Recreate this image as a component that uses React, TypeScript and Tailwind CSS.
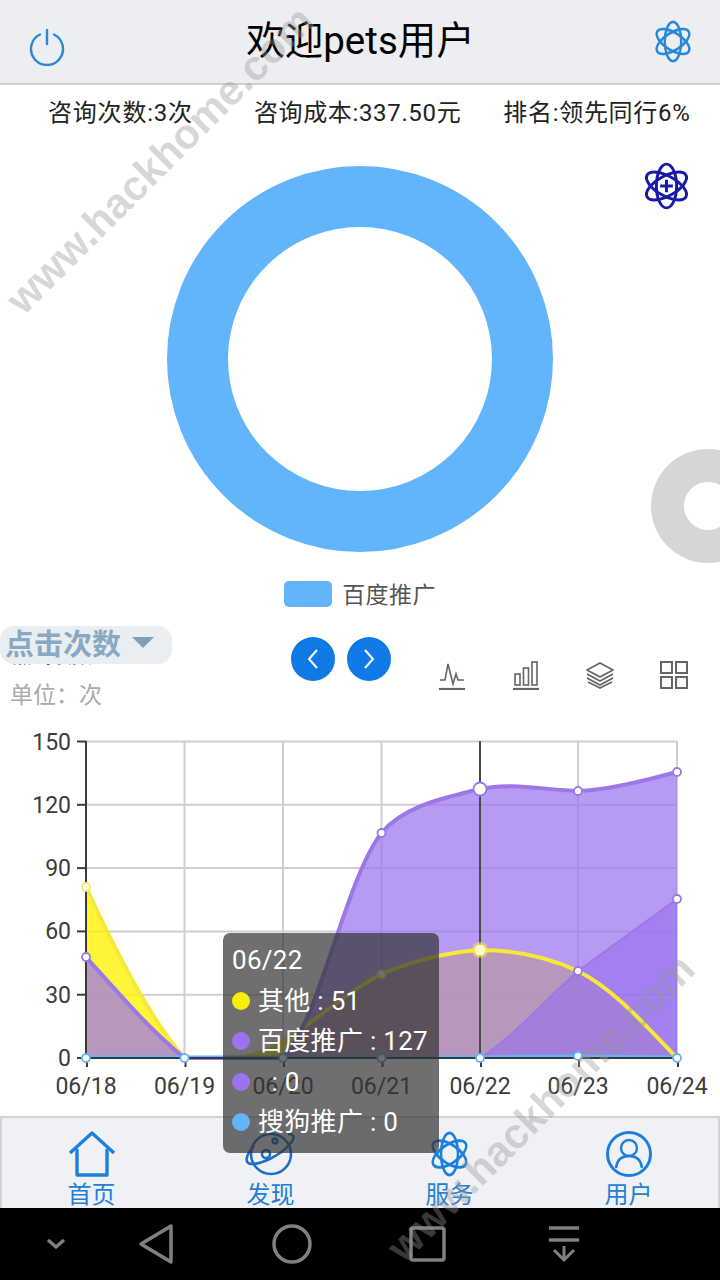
const font = "font-['Roboto','Noto_Sans_CJK_SC',sans-serif]";

function Atom({ color, w = 40, h = 43, plus = false }: { color: string; w?: number; h?: number; plus?: boolean }) {
  return (
    <svg width={w} height={h} viewBox="0 0 46 46" preserveAspectRatio="none" fill="none" stroke={color} strokeWidth="2.8">
      <ellipse cx="23" cy="23" rx="9.5" ry="21" />
      <ellipse cx="23" cy="23" rx="9.5" ry="21" transform="rotate(60 23 23)" />
      <ellipse cx="23" cy="23" rx="9.5" ry="21" transform="rotate(-60 23 23)" />
      {plus && <path d="M23 17v12M17 23h12" strokeWidth="2.8" />}
    </svg>
  );
}

function ToolIcons() {
  return (
    <div className="ml-[46px] mt-[34px] flex gap-[44px]">
      <svg width="30" height="30" viewBox="0 0 30 30" fill="none" stroke="#666" strokeWidth="1.6">
        <path d="M3 20h5l3-16 5 20 3-10 2 6h6" />
        <path d="M2 29h26" strokeWidth="2.2" />
      </svg>
      <svg width="30" height="30" viewBox="0 0 30 30" fill="none" stroke="#666" strokeWidth="1.6">
        <rect x="4" y="14" width="5" height="11" />
        <rect x="12.5" y="8" width="5" height="17" />
        <rect x="21" y="2" width="5" height="23" />
        <path d="M2 29h26" strokeWidth="2.2" />
      </svg>
      <svg width="30" height="30" viewBox="0 0 30 30" fill="none" stroke="#666" strokeWidth="1.8" strokeLinejoin="round">
        <path d="M15 3l13 7-13 7-13-7z" />
        <path d="M2 14l13 7 13-7M2 18l13 7 13-7M3 22l12 6 12-6" />
      </svg>
      <svg width="30" height="30" viewBox="0 0 30 30" fill="none" stroke="#666" strokeWidth="2">
        <rect x="2" y="2" width="11" height="11" />
        <rect x="17" y="2" width="11" height="11" />
        <rect x="2" y="17" width="11" height="11" />
        <rect x="17" y="17" width="11" height="11" />
      </svg>
    </div>
  );
}

function Chart() {
  const xs = [86, 184.5, 283, 381.5, 480, 578, 677];
  const ys = [741.5, 804.8, 868.1, 931.4, 994.7, 1058];
  const yLabels = ["150", "120", "90", "60", "30", "0"];
  const xLabels = ["06/18", "06/19", "06/20", "06/21", "06/22", "06/23", "06/24"];
  const big =
    "M86 957C120 995 150 1030 184.5 1058L283 1058C320 1020 345 880 381.5 833C405 805 445 798 480 789C510 782 545 790 578 791C610 790 645 780 677 772";
  const yellow =
    "M86 887C115 950 150 1020 184.5 1058L240 1058C290 1050 330 1000 381.5 974C420 958 450 952 480 950C520 950 550 958 578 971C615 990 645 1025 677 1058";
  const second = "M480 1058C510 1040 540 1005 578 971L677 899";
  const dots = (pts: number[][], stroke: string) =>
    pts.map(([x, y]) => <circle key={x + "-" + y} cx={x} cy={y} r="4" fill="#fff" stroke={stroke} strokeWidth="1.8" />);

  return (
    <svg className="mt-[16px] block" width="720" height="390" viewBox="0 726 720 390">
      {ys.map((y) => (
        <line key={y} x1="86" x2="677" y1={y} y2={y} stroke="#cfcfcf" strokeWidth="2" />
      ))}
      {xs.map((x) => (
        <line key={x} x1={x} x2={x} y1="741" y2="1058" stroke="#cfcfcf" strokeWidth="2" />
      ))}

      <path d={yellow + "L86 1058Z"} fill="#fff200" fillOpacity="0.78" />
      <path d={big + "L677 1058L86 1058Z"} fill="#9b73ee" fillOpacity="0.72" />
      <path d={second + "L677 1058Z"} fill="#9470ee" fillOpacity="0.6" />
      <path d={yellow} fill="none" stroke="#f7e83a" strokeWidth="4" />
      <path d={big} fill="none" stroke="#9b78e6" strokeWidth="4" />
      <path d={second} fill="none" stroke="#9b78e6" strokeWidth="2" />
      <path d="M86 1057H480C520 1056 560 1056 578 1056L677 1057" fill="none" stroke="#62b5fb" strokeWidth="3" />

      <path d="M86 741V1058H677" fill="none" stroke="#3a3a3a" strokeWidth="2" />
      {ys.map((y) => (
        <line key={y} x1="77" x2="86" y1={y} y2={y} stroke="#3a3a3a" strokeWidth="2" />
      ))}
      {xs.map((x) => (
        <line key={x} x1={x + 1} x2={x + 1} y1="1058" y2="1067" stroke="#3a3a3a" strokeWidth="2" />
      ))}
      <line x1="480" x2="480" y1="741" y2="1058" stroke="#4a4a4a" strokeWidth="2" />

      {yLabels.map((l, i) => (
        <text key={l} x="71" y={ys[i] + 8} textAnchor="end" fontSize="23" fill="#3c3c3c" fontFamily="Roboto, sans-serif">
          {l}
        </text>
      ))}
      {xLabels.map((l, i) => (
        <text key={l} x={xs[i]} y="1094" textAnchor="middle" fontSize="23" fill="#3c3c3c" fontFamily="Roboto, sans-serif">
          {l}
        </text>
      ))}

      {dots([[86, 887]], "#f4ec60")}
      {dots([[86, 957], [381.5, 833], [578, 791], [677, 772], [677, 899], [578, 971]], "#9b78e6")}
      {dots([[381.5, 974]], "#f4ec60")}
      {dots([[86, 1058], [184.5, 1058], [283, 1058], [381.5, 1058], [480, 1058], [578, 1056], [677, 1058]], "#62b5fb")}
      <circle cx="480" cy="789" r="6.5" fill="#fff" stroke="#9b78e6" strokeWidth="1.8" />
      <circle cx="480" cy="950" r="8" fill="#f7e83a" fillOpacity="0.6" />
      <circle cx="480" cy="950" r="5.5" fill="#fffbc0" />
    </svg>
  );
}

function BottomNav() {
  const labelCls = "mt-[2px] text-[24px] leading-[32px] text-[#2480d6]";
  return (
    <nav className="grid h-[92px] grid-cols-4 overflow-hidden border-x-2 border-t-2 border-[#d2d2d2] bg-[#eff1f5]">
      <div className="flex flex-col items-center pt-[13px]">
        <svg width="48" height="46" viewBox="0 0 48 46" fill="none" stroke="#1c7fdc" strokeWidth="3.4" strokeLinejoin="round">
          <path d="M2 22L24 2l22 20" />
          <path d="M9 18v26h30V18" />
        </svg>
        <span className={labelCls}>首页</span>
      </div>
      <div className="flex flex-col items-center pt-[13px]">
        <svg width="58" height="46" viewBox="0 0 58 46" fill="none" stroke="#1c6fc4" strokeWidth="2.6">
          <circle cx="29" cy="23" r="20" />
          <path d="M12 15C2 26 3 33 10 33c9 0 28-8 38-20 5-6 5-10-2-10" />
          <circle cx="24" cy="23" r="4" />
          <circle cx="33" cy="10" r="2.4" />
        </svg>
        <span className={labelCls}>发现</span>
      </div>
      <div className="flex flex-col items-center pt-[13px]">
        <Atom color="#1c7fdc" w={41} h={46} />
        <span className={labelCls}>服务</span>
      </div>
      <div className="flex flex-col items-center pt-[13px]">
        <svg width="48" height="46" viewBox="0 0 48 46" fill="none" stroke="#1c7fdc" strokeWidth="3">
          <circle cx="24" cy="23" r="21.5" />
          <circle cx="24" cy="17" r="8" strokeWidth="2.4" />
          <path d="M11 37c1-9 7-12 13-12s12 3 13 12" strokeWidth="2.4" />
        </svg>
        <span className={labelCls}>用户</span>
      </div>
    </nav>
  );
}

function SystemBar() {
  return (
    <div className="h-[72px] bg-black">
      <svg width="720" height="72" viewBox="0 1208 720 72" fill="none" stroke="#808080" strokeWidth="3.5" strokeLinejoin="round">
        <path d="M48 1240l8 7 8-7" />
        <path d="M171 1226v36l-30-18z" />
        <circle cx="292" cy="1244" r="18" />
        <rect x="411" y="1228" width="33" height="32" rx="2" />
        <path d="M549 1228h30M549 1240h30" />
        <path d="M564 1246v14M554 1250l10 10 10-10" strokeWidth="3" />
      </svg>
    </div>
  );
}

export default function App() {
  const rows = [
    { dot: "bg-[#f7ee0a]", text: "其他 : 51" },
    { dot: "bg-[#9b73ee]", text: "百度推广 : 127" },
    { dot: "bg-[#9b73ee]", text: "\u00a0 : 0" },
    { dot: "bg-[#62b5fb]", text: "搜狗推广 : 0" },
  ];

  return (
    <div className={`relative flex h-[1280px] w-[720px] flex-col overflow-hidden bg-white ${font}`}>
      <header className="flex h-[85px] shrink-0 items-center border-b-2 border-[#cdcfd2] bg-[#eceef2]">
        <div className="flex-1 pl-[28px] pt-[10px]">
          <svg width="38" height="38" viewBox="0 0 38 38" fill="none" stroke="#2b87d8" strokeWidth="2.4" strokeLinecap="round">
            <path d="M12 6.5a16 16 0 1 0 14 0" />
            <path d="M19 2v14" />
          </svg>
        </div>
        <h1 className="text-[38.5px] font-normal leading-none text-black">欢迎pets用户</h1>
        <div className="flex flex-1 justify-end pr-[27px]">
          <Atom color="#2b87d8" />
        </div>
      </header>

      <div className="flex h-[56px] shrink-0 items-center text-[24px] text-[#222]">
        <span className="ml-[48px] tracking-[0.8px]">咨询次数:3次</span>
        <span className="ml-[61px] tracking-[0.65px]">咨询成本:337.50元</span>
        <span className="ml-[42px] tracking-[0.7px]">排名:领先同行6%</span>
      </div>

      <div className="mt-[25px] flex shrink-0 justify-center">
        <svg width="386" height="386" viewBox="0 0 386 386" fill="none">
          <circle cx="193" cy="193" r="162.5" stroke="#62b5fb" strokeWidth="61" />
        </svg>
      </div>

      <div className="mt-[29px] flex h-[26px] shrink-0 items-center justify-center gap-[10px]">
        <span className="h-[26px] w-[48px] rounded-[5px] bg-[#62b5fb]" />
        <span className="pt-[2px] text-[23px] leading-none tracking-[0.4px] text-[#555]">百度推广</span>
      </div>

      <div className="relative mt-[19px] flex h-[56px] shrink-0 items-start">
        <span className="absolute left-[12px] top-[18px] text-[20px] font-bold leading-[24px] text-[#555]">点击次数</span>
        <div className="relative flex h-[38px] w-[172px] items-center rounded-[14px] bg-[#e9eef3] pl-[5px]">
          <span className="text-[29px] font-bold leading-none text-[#89a9c1]">点击次数</span>
          <span className="ml-[11px] mb-[6px] h-0 w-0 border-x-[11px] border-t-[11px] border-x-transparent border-t-[#7f9fb8]" />
        </div>
        <div className="ml-[119px] mt-[11px] flex gap-[12px]">
          <div className="flex h-[44px] w-[44px] items-center justify-center rounded-full bg-[#0f7ae5]">
            <svg width="14" height="22" viewBox="0 0 14 22" fill="none" stroke="#fff" strokeWidth="2">
              <path d="M11 2L3 11l8 9" />
            </svg>
          </div>
          <div className="flex h-[44px] w-[44px] items-center justify-center rounded-full bg-[#0f7ae5]">
            <svg width="14" height="22" viewBox="0 0 14 22" fill="none" stroke="#fff" strokeWidth="2">
              <path d="M3 2l8 9-8 9" />
            </svg>
          </div>
        </div>
        <ToolIcons />
      </div>

      <div className="h-[28px] shrink-0 pl-[10px] text-[23px] leading-[28px] text-[#aaa]">单位：次</div>

      <Chart />
      <BottomNav />
      <SystemBar />

      <div className="absolute left-[642px] top-[162px]">
        <Atom color="#1a1aa8" w={49} h={48} plus />
      </div>

      <div className="absolute left-[651px] top-[449px] flex h-[114px] w-[114px] items-center justify-center rounded-full bg-[#d6d6d6]">
        <div className="h-[48px] w-[48px] rounded-full bg-white" />
      </div>

      <div className="absolute left-[223px] top-[933px] h-[220px] w-[216px] rounded-[7px] bg-[rgba(50,50,50,0.7)] pl-[9px] pt-[7px] text-[26px] leading-[40.5px] tracking-[0.3px] text-white">
        <div>06/22</div>
        {rows.map((r) => (
          <div key={r.text} className="flex items-center whitespace-pre">
            <span className={`mr-[8px] h-[18px] w-[18px] rounded-full ${r.dot}`} />
            {r.text}
          </div>
        ))}
      </div>

      <div className="pointer-events-none absolute left-[160px] top-[160px] -translate-x-1/2 -translate-y-1/2 -rotate-45 whitespace-nowrap font-['Liberation_Sans',sans-serif] text-[42px] font-bold leading-none text-[rgba(150,150,150,0.38)]">
        www.hackhome.com
      </div>
      <div className="pointer-events-none absolute left-[541px] top-[1108px] -translate-x-1/2 -translate-y-1/2 -rotate-45 whitespace-nowrap font-['Liberation_Sans',sans-serif] text-[42px] font-bold leading-none text-[rgba(150,150,150,0.38)]">
        www.hackhome.com
      </div>
    </div>
  );
}
